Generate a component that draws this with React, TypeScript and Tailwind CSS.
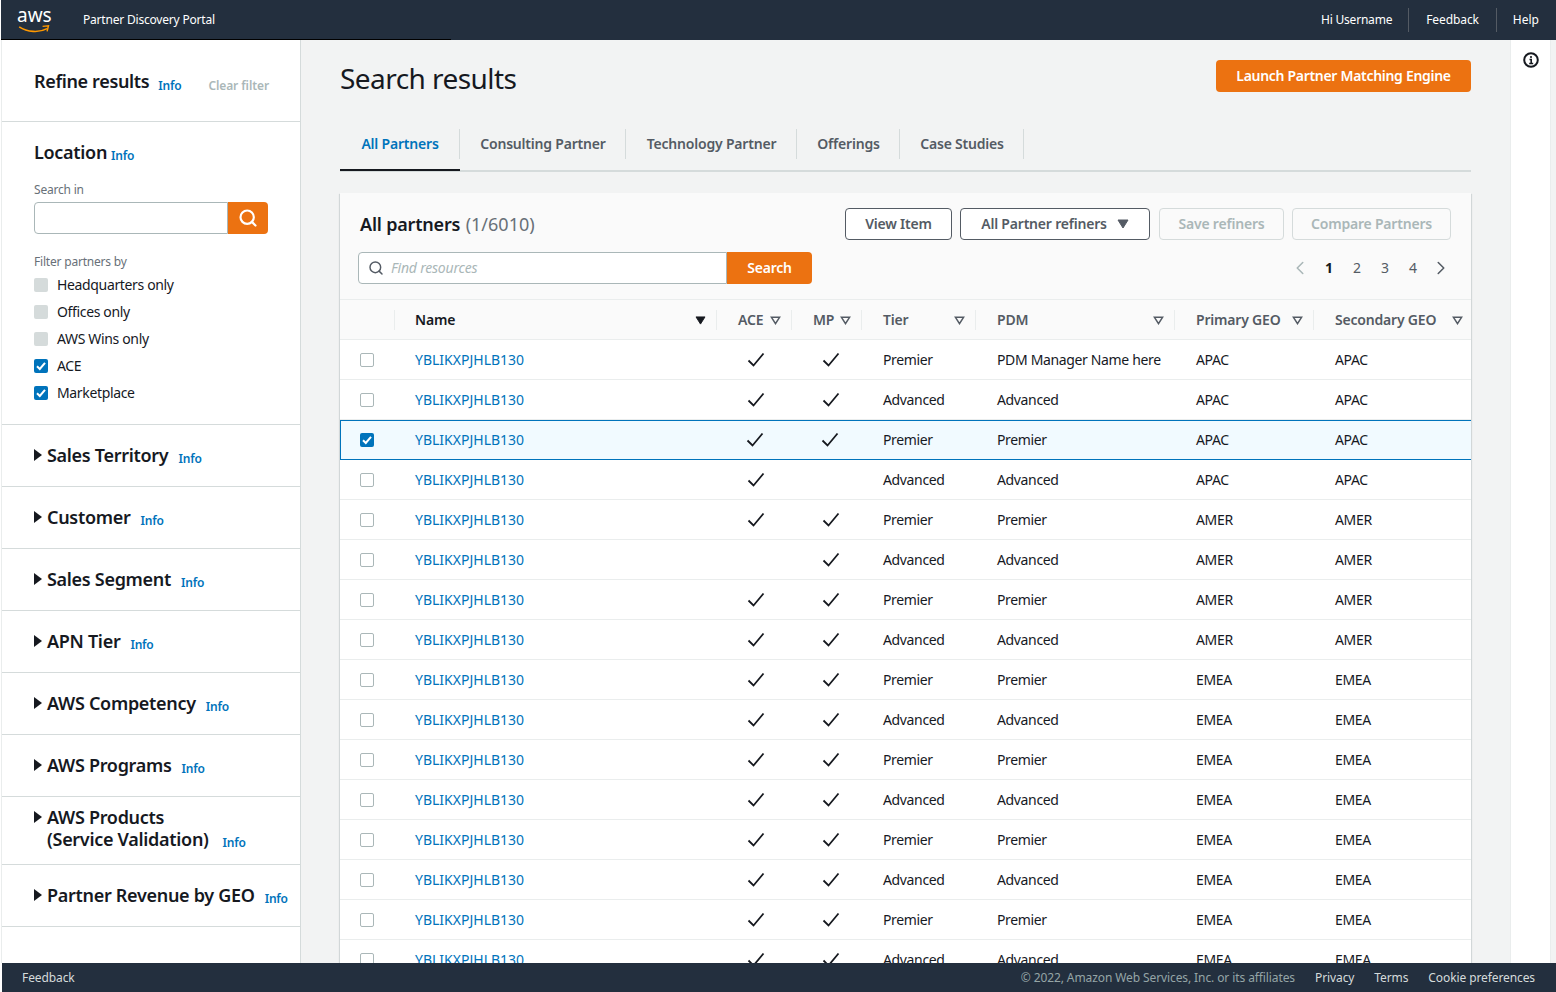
import { ChevronLeft, ChevronRight, Search } from "lucide-react";

const FONT = "font-['Noto_Sans','Open_Sans',sans-serif]";

const collapsedSections = [
  { title: "Sales Territory" },
  { title: "Customer" },
  { title: "Sales Segment" },
  { title: "APN Tier" },
  { title: "AWS Competency" },
  { title: "AWS Programs" },
  { title: "AWS Products", second: "(Service Validation)" },
  { title: "Partner Revenue by GEO" },
];

const filters = [
  { label: "Headquarters only", on: false },
  { label: "Offices only", on: false },
  { label: "AWS Wins only", on: false },
  { label: "ACE", on: true },
  { label: "Marketplace", on: true },
];

const tabs = [
  { label: "All Partners", width: "w-[120px]" },
  { label: "Consulting Partner", width: "w-[166px]" },
  { label: "Technology Partner", width: "w-[171px]" },
  { label: "Offerings", width: "w-[103px]" },
  { label: "Case Studies", width: "w-[124px]" },
];

const geos = ["APAC", "APAC", "APAC", "APAC", "AMER", "AMER", "AMER", "AMER", "EMEA", "EMEA", "EMEA", "EMEA", "EMEA", "EMEA", "EMEA", "EMEA"];

const columns = "grid grid-cols-[55px_322px_75px_70px_114px_199px_139px_157px]";

const Info = ({ className = "" }: { className?: string }) => (
  <span className={`text-xs font-semibold tracking-[-0.2px] text-[#0073bb] ${className}`}>Info</span>
);

const Tick = ({ className = "" }: { className?: string }) => (
  <svg viewBox="0 0 18 16" className={`h-4 w-[18px] ${className}`} fill="none">
    <path d="M1.5 8.5 6.5 13.5 16.5 1.5" stroke="#16191f" strokeWidth="1.8" />
  </svg>
);

const BoxTick = () => (
  <svg viewBox="0 0 14 14" className="h-[14px] w-[14px]" fill="none">
    <path d="M3 7.2 5.8 10 11 3.8" stroke="#fff" strokeWidth="2" />
  </svg>
);

const SortCaret = ({ solid = false }: { solid?: boolean }) => (
  <svg viewBox="0 0 12 10" className="h-[9px] w-[11px] shrink-0" fill="none">
    {solid ? (
      <path d="M1 1h10L6 9z" fill="#16191f" stroke="#16191f" />
    ) : (
      <path d="M1.5 1.5h9L6 8.5z" stroke="#545b64" strokeWidth="1.7" />
    )}
  </svg>
);

const HeadCell = ({ label, solid = false, last = false }: { label: string; solid?: boolean; last?: boolean }) => (
  <div className={`flex h-10 items-center ${solid ? "pl-5" : "pl-[21px]"}`}>
    <div
      className={`flex h-5 items-center justify-between ${
        last ? "w-full pr-2" : "w-[calc(100%+1px)] border-r border-[#eaeded] pr-[10px]"
      }`}
    >
      <span className={`text-sm font-semibold tracking-[-0.2px] ${solid ? "text-[#16191f]" : "text-[#545b64]"}`}>{label}</span>
      <SortCaret solid={solid} />
    </div>
  </div>
);

const Sidebar = () => (
  <aside className="ml-px w-[300px] shrink-0 border-x border-l-[#eaeded] border-r-[#d5dbdb] bg-white">
    <div className="flex h-[82px] items-center border-b border-[#d5dbdb] pl-8 pr-[31px]">
      <h2 className="text-lg font-semibold tracking-[-0.35px] text-[#16191f]">Refine results</h2>
      <Info className="ml-[9px] mt-[10px]" />
      <span className="ml-auto mt-[10px] text-xs font-semibold tracking-[-0.1px] text-[#aab7b8]">Clear filter</span>
    </div>
    <div className="h-[303px] border-b border-[#d5dbdb] px-8 pt-4">
      <div className="flex items-center">
        <h3 className="text-lg font-semibold tracking-[-0.3px] text-[#16191f]">Location</h3>
        <Info className="ml-[4px] mt-2" />
      </div>
      <div className="mt-4 text-xs tracking-[-0.2px] text-[#687078]">Search in</div>
      <div className="mt-1 flex h-8 w-[234px]">
        <div className="flex-1 rounded-l-sm border border-[#aab7b8] bg-white" />
        <div className="flex w-10 items-center justify-center rounded-r-sm bg-[#ec7211]">
          <Search className="h-5 w-5 text-white" strokeWidth={2.6} />
        </div>
      </div>
      <div className="mt-5 text-xs tracking-[-0.2px] text-[#687078]">Filter partners by</div>
      <div className="mt-[1px]">
        {filters.map((f) => (
          <div key={f.label} className="flex h-[27px] items-center gap-[9px]">
            {f.on ? (
              <span className="flex h-[14px] w-[14px] items-center justify-center rounded-[2px] bg-[#0073bb]">
                <BoxTick />
              </span>
            ) : (
              <span className="h-[14px] w-[14px] rounded-[2px] bg-[#d5dbdb]" />
            )}
            <span className="text-sm tracking-[-0.35px] text-[#16191f]">{f.label}</span>
          </div>
        ))}
      </div>
    </div>
    {collapsedSections.map((s) => (
      <div
        key={s.title}
        className={`flex items-center border-b border-[#d5dbdb] pl-8 ${s.second ? "h-[68px] pb-[6px]" : "h-[62px] pb-[2px]"}`}
      >
        <div className={`flex ${s.second ? "items-start" : "items-center"} gap-[5px]`}>
          <span className={`h-0 w-0 border-y-[6px] border-l-[8px] border-y-transparent border-l-[#16191f] ${s.second ? "mt-[5px]" : ""}`} />
          <div className="text-lg font-semibold leading-[22px] tracking-[-0.3px] text-[#16191f]">
            {s.title}
            {s.second && <div>{s.second}<Info className="relative top-px ml-[14px]" /></div>}
          </div>
          {!s.second && <Info className="ml-[5px] mt-2" />}
        </div>
      </div>
    ))}
  </aside>
);

const Tabs = () => (
  <div className="mt-6 flex h-[52px] border-b-2 border-[#d5dbdb] pb-[3px] text-sm font-semibold tracking-[-0.2px] text-[#545b64]">
    {tabs.map((t, i) => (
      <div
        key={t.label}
        className={`relative flex items-center justify-center ${t.width} ${i === 0 ? "text-[#0073bb]" : ""}`}
      >
        {t.label}
        <span className="absolute right-0 top-[9px] h-[30px] w-px bg-[#d5dbdb]" />
        {i === 0 && <span className="absolute inset-x-0 -bottom-[4px] h-[2px] bg-[#16191f]" />}
      </div>
    ))}
  </div>
);

const Toolbar = () => (
  <div className="h-[107px] border-b border-[#eaeded] bg-[#fafafa] px-5 pt-[15px]">
    <div className="flex h-8 items-center">
      <h2 className="text-lg font-semibold tracking-[-0.2px] text-[#16191f]">
        All partners <span className="ml-[1px] font-normal tracking-normal text-[#687078]">(1/6010)</span>
      </h2>
      <div className="ml-auto flex gap-2 text-sm font-semibold tracking-[-0.2px]">
        <div className="flex h-8 w-[107px] items-center justify-center rounded-sm border border-[#545b64] bg-white text-[#545b64]">View Item</div>
        <div className="mr-px flex h-8 w-[190px] items-center justify-center gap-[10px] rounded-sm border border-[#545b64] bg-white text-[#545b64]">
          All Partner refiners
          <svg viewBox="0 0 12 10" className="h-[10px] w-3"><path d="M1 1h10L6 9z" fill="#545b64" stroke="#545b64" /></svg>
        </div>
        <div className="flex h-8 w-[125px] items-center justify-center rounded-sm border border-[#d5dbdb] text-[#aab7b8]">Save refiners</div>
        <div className="flex h-8 w-[159px] items-center justify-center rounded-sm border border-[#d5dbdb] text-[#aab7b8]">Compare Partners</div>
      </div>
    </div>
    <div className="-ml-[2px] mt-3 flex h-8 items-center">
      <div className="flex h-8 w-[369px] items-center rounded-l-sm border border-[#aab7b8] bg-white pl-[9px]">
        <Search className="h-4 w-4 text-[#545b64]" strokeWidth={2.2} />
        <span className="ml-[7px] text-sm italic tracking-[-0.2px] text-[#aab7b8]">Find resources</span>
      </div>
      <div className="flex h-8 w-[85px] items-center justify-center rounded-r-sm bg-[#ec7211] text-sm font-semibold tracking-[-0.2px] text-white">Search</div>
      <div className="ml-auto -mr-px flex items-center text-sm text-[#545b64]">
        <ChevronLeft className="mr-1 h-[22px] w-[22px] text-[#aab7b8]" strokeWidth={1.7} />
        <span className="w-7 text-center font-bold text-[#16191f]">1</span>
        <span className="w-7 text-center">2</span>
        <span className="w-7 text-center">3</span>
        <span className="w-7 text-center">4</span>
        <ChevronRight className="ml-[3px] h-[22px] w-[22px] text-[#545b64]" strokeWidth={1.7} />
      </div>
    </div>
  </div>
);

const Row = ({ i }: { i: number }) => {
  const selected = i === 2;
  const premier = i % 2 === 0;
  const tier = premier ? "Premier" : "Advanced";
  const pdm = i === 0 ? "PDM Manager Name here" : tier;
  const ace = i !== 5;
  const mp = i !== 3;
  return (
    <div
      className={`${columns} h-10 items-center text-sm tracking-[-0.35px] text-[#16191f] ${
        selected
          ? "border-y border-[#0073bb] bg-[#f1faff] shadow-[inset_1px_0_0_#0073bb]"
          : "border-b border-[#eaeded]"
      }`}
    >
      <div className="pl-5">
        {selected ? (
          <span className="flex h-[14px] w-[14px] items-center justify-center rounded-[2px] bg-[#0073bb]">
            <BoxTick />
          </span>
        ) : (
          <span className="block h-[14px] w-[14px] rounded-[2px] border border-[#aab7b8] bg-white" />
        )}
      </div>
      <div className="pl-5 tracking-normal text-[#0073bb]">YBLIKXPJHLB130</div>
      <div className="pl-[30px]">{ace && <Tick className={selected ? "-ml-px" : ""} />}</div>
      <div className="pl-[30px]">{mp && <Tick className={selected ? "-ml-px" : ""} />}</div>
      <div className="pl-[21px]">{tier}</div>
      <div className="pl-[21px] whitespace-nowrap">{pdm}</div>
      <div className="pl-[21px]">{geos[i]}</div>
      <div className="pl-[21px]">{geos[i]}</div>
    </div>
  );
};

const Results = () => (
  <div className="mt-[21px] w-[1131px] bg-white shadow-[0_1px_1px_0_rgba(0,28,36,0.2),1px_1px_1px_0_rgba(0,28,36,0.1),-1px_1px_1px_0_rgba(0,28,36,0.1)]">
    <Toolbar />
    <div className={`${columns} h-10 border-b border-[#eaeded] bg-[#fafafa]`}>
      <div className="flex h-10 items-center"><div className="h-5 w-full border-r border-[#eaeded]" /></div>
      <HeadCell label="Name" solid />
      <HeadCell label="ACE" />
      <HeadCell label="MP" />
      <HeadCell label="Tier" />
      <HeadCell label="PDM" />
      <HeadCell label="Primary GEO" />
      <HeadCell label="Secondary GEO" last />
    </div>
    {geos.map((_, i) => (
      <Row key={i} i={i} />
    ))}
  </div>
);

export default function App() {
  return (
    <div className={`flex h-[992px] w-[1556px] flex-col overflow-hidden bg-white ${FONT}`}>
      <header className="relative ml-px flex h-10 shrink-0 items-center bg-[#232f3e] text-xs text-white">
        <div className="relative ml-[16px] h-8 w-[36px]">
          <span className="absolute left-0 -top-[2px] text-[19px] leading-[26px] text-white">aws</span>
          <svg viewBox="0 0 36 10" className="absolute left-0 top-[21px] h-[9px] w-[35px]" fill="none">
            <path d="M1 2c9 6 22 7 31 2" stroke="#ff9900" strokeWidth="1.8" />
            <path d="M27 1.5l6.5-.5-1.5 6" stroke="#ff9900" strokeWidth="1.6" />
          </svg>
        </div>
        <span className="ml-[30px] tracking-[-0.2px]">Partner Discovery Portal</span>
        <div className="ml-auto flex h-6 items-center pr-[17px]">
          <span className="pr-4 tracking-[-0.2px]">Hi Username</span>
          <span className="border-l border-[#545b64] px-[17px] leading-6 tracking-[-0.1px]">Feedback</span>
          <span className="border-l border-[#545b64] pl-4 leading-6">Help</span>
        </div>
        <span className="absolute bottom-0 left-0 h-px w-[450px] bg-black" />
      </header>
      <div className="flex min-h-0 flex-1 overflow-hidden">
        <Sidebar />
        <main className="min-w-0 flex-1 overflow-hidden bg-[#f2f3f3] pl-[39px]">
          <div className="flex items-start pr-[39px] pt-5">
            <h1 className="text-[28px] leading-9 tracking-[-0.55px] text-[#16191f]">Search results</h1>
            <div className="ml-auto flex h-8 w-[255px] items-center justify-center rounded-sm bg-[#ec7211] text-sm font-semibold tracking-[-0.3px] text-white">
              Launch Partner Matching Engine
            </div>
          </div>
          <div className="w-[1131px]">
            <Tabs />
          </div>
          <Results />
        </main>
        <div className="flex w-[46px] shrink-0 bg-[#f2f3f3]">
          <div className="flex w-[41px] justify-center border-x border-x-[#eaeded] bg-white pt-3">
            <svg viewBox="0 0 16 16" className="h-4 w-4" fill="none">
              <circle cx="8" cy="8" r="6.8" stroke="#16191f" strokeWidth="2" />
              <path d="M8 4v2M6.5 7.5H8.2V11.5M6.2 11.5h4" stroke="#16191f" strokeWidth="1.6" />
            </svg>
          </div>
        </div>
      </div>
      <footer className="ml-[2px] flex h-[29px] shrink-0 items-center bg-[#232f3e] pl-5 pr-[21px] text-xs tracking-[-0.1px] text-[#d5dbdb]">
        <span>Feedback</span>
        <span className="ml-auto text-[#95a5a6]">© 2022, Amazon Web Services, Inc. or its affiliates</span>
        <span className="ml-5">Privacy</span>
        <span className="ml-5">Terms</span>
        <span className="ml-5">Cookie preferences</span>
      </footer>
    </div>
  );
}
